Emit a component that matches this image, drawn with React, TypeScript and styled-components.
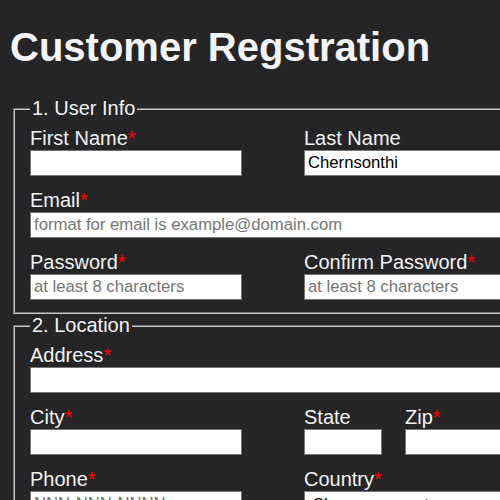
import React from "react";
import styled, { createGlobalStyle } from "styled-components";

const Global = createGlobalStyle`
  html, body { margin: 0; padding: 0; overflow: hidden; background: #252527; }
  body { font-family: "Liberation Sans", Arial, sans-serif; color: #f2f2f2; }
  #root { width: 560px; }
`;

const Page = styled.div`
  padding: 0 0 0 10px;
`;

const Title = styled.h1`
  margin: 24px 0 27px 0;
  font-size: 40px;
  line-height: 46px;
  font-weight: 700;
  color: #f4f4f4;
`;

const Form = styled.form`
  display: flex;
  flex-direction: column;
`;

const Section = styled.fieldset`
  margin: 0 0 0 3px;
  padding: 7px 15px 12px 15px;
  border: 2px groove #c8c8c8;
  font-size: 20px;
  min-width: 0;
`;

const Legend = styled.legend`
  padding: 0 2px;
  font-size: 20px;
  line-height: 23px;
  color: #f2f2f2;
`;

const Grid = styled.div`
  display: grid;
  grid-template-columns: 274px 101px 1fr;
  row-gap: 13px;
`;

const Field = styled.div<{ $col?: string }>`
  display: flex;
  flex-direction: column;
  grid-column: ${(p) => p.$col || "auto"};
`;

const Label = styled.label`
  font-size: 20px;
  line-height: 23px;
  color: #f2f2f2;
  white-space: nowrap;
`;

const Req = styled.span`
  color: #ff0000;
`;

const Input = styled.input<{ $w?: number }>`
  box-sizing: border-box;
  width: ${(p) => (p.$w ? `${p.$w}px` : "100%")};
  height: 26px;
  margin: 0;
  padding: 0 3px;
  border: 1px solid #767676;
  background: #ffffff;
  color: #000000;
  font-family: "Liberation Sans", Arial, sans-serif;
  font-size: 16.7px;
  outline: none;
  &::placeholder { color: #757575; }
`;

const Select = styled.select`
  box-sizing: border-box;
  width: 212px;
  height: 26px;
  margin: 0;
  padding: 0 3px;
  border: 1px solid #767676;
  background: #ffffff;
  color: #000;
  font-family: "Liberation Sans", Arial, sans-serif;
  font-size: 16.7px;
`;

const F = ({
  label,
  req,
  col,
  children,
}: {
  label: string;
  req?: boolean;
  col?: string;
  children: React.ReactNode;
}) => (
  <Field $col={col}>
    <Label>
      {label}
      {req && <Req>*</Req>}
    </Label>
    {children}
  </Field>
);

export default function App() {
  return (
    <Page>
      <Global />
      <Title>Customer Regstration</Title>
      <Form>
        <Section>
          <Legend>1. User Info</Legend>
          <Grid>
            <F label="First Name" req>
              <Input $w={212} />
            </F>
            <F label="Last Name" col="2 / 4">
              <Input $w={212} defaultValue="Chernsonthi" />
            </F>
            <F label="Email" req col="1 / 4">
              <Input placeholder="format for email is example@domain.com" />
            </F>
            <F label="Password" req>
              <Input $w={212} type="password" placeholder="at least 8 characters" />
            </F>
            <F label="Confirm Password" req col="2 / 4">
              <Input $w={212} type="password" placeholder="at least 8 characters" />
            </F>
          </Grid>
        </Section>
        <Section>
          <Legend>2. Location</Legend>
          <Grid>
            <F label="Address" req col="1 / 4">
              <Input />
            </F>
            <F label="City" req>
              <Input $w={212} />
            </F>
            <F label="State">
              <Input $w={78} />
            </F>
            <F label="Zip" req>
              <Input $w={120} />
            </F>
            <F label="Phone" req>
              <Input $w={212} placeholder="NNN-NNN-NNNN" />
            </F>
            <F label="Country" req col="2 / 4">
              <Select defaultValue="">
                <option value="">Choose a country</option>
              </Select>
            </F>
          </Grid>
        </Section>
      </Form>
    </Page>
  );
}
